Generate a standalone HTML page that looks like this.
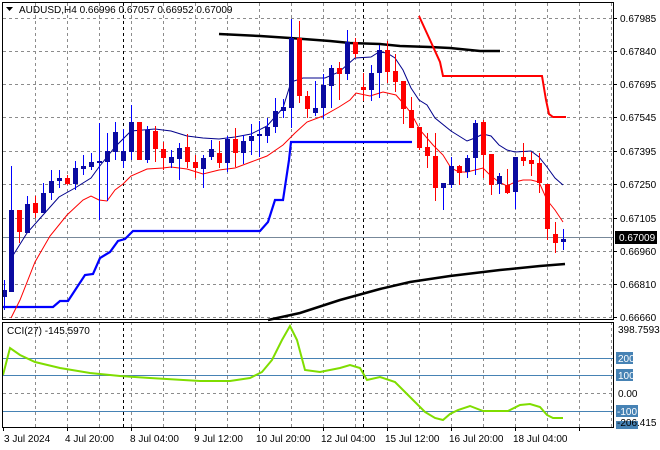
<!DOCTYPE html>
<html><head><meta charset="utf-8"><style>
html,body{margin:0;padding:0;background:#fff;width:660px;height:450px;overflow:hidden}
svg{display:block}
text{font-family:"Liberation Sans",sans-serif;font-size:10px;fill:#000}
</style></head><body>
<svg width="660" height="450" viewBox="0 0 660 450" xmlns="http://www.w3.org/2000/svg">
<rect width="660" height="450" fill="#fff"/>
<!-- grid -->
<g stroke="#8c8c8c" stroke-width="1" stroke-dasharray="3,3" shape-rendering="crispEdges">
<path d="M3 18.5H614M3 51.5H614M3 84.5H614M3 117.5H614M3 151.5H614M3 184.5H614M3 218.5H614M3 251.5H614M3 284.5H614M3 317.5H614M3 393.5H614"/>
<path d="M35.5 3V320M67.5 3V320M99.5 3V320M131.5 3V320M163.5 3V320M195.5 3V320M227.5 3V320M259.5 3V320M291.5 3V320M323.5 3V320M355.5 3V320M387.5 3V320M419.5 3V320M451.5 3V320M483.5 3V320M515.5 3V320M547.5 3V320M579.5 3V320M611.5 3V320"/>
<path d="M35.5 322V428M67.5 322V428M99.5 322V428M131.5 322V428M163.5 322V428M195.5 322V428M227.5 322V428M259.5 322V428M291.5 322V428M323.5 322V428M355.5 322V428M387.5 322V428M419.5 322V428M451.5 322V428M483.5 322V428M515.5 322V428M547.5 322V428M579.5 322V428M611.5 322V428"/>
</g>
<g stroke="#000" stroke-width="1" stroke-dasharray="3,3" shape-rendering="crispEdges">
<path d="M123.5 3V320M123.5 322V428M363.5 3V320M363.5 322V428"/>
</g>
<!-- current price line -->
<path d="M3 237.5H614" stroke="#778899" stroke-width="1" shape-rendering="crispEdges"/>
<!-- CCI levels -->
<g stroke="#4682b4" stroke-width="1" shape-rendering="crispEdges">
<path d="M3 358.5H614M3 375.5H614M3 411.5H614"/>
</g>
<!-- thick black MAs -->
<polyline points="219,34 260,36 290,38 330,41 350,43 380,44 400,46 430,47 450,48 480,51 500,51" fill="none" stroke="#000" stroke-width="2.5"/>
<polyline points="268,320 300,313 340,300 380,289 410,282 450,276 500,270 540,266 565,264" fill="none" stroke="#000" stroke-width="2.5"/>
<!-- blue stepped -->
<polyline points="3,307 12,307 53,307 60,301 68,301 85,275 93,274 100,258 110,252 118,241 125,239 133,231 260,231 268,222 275,200 283,200 289,160 291,142 412,142" fill="none" stroke="#0000ff" stroke-width="2.2"/>
<!-- red stepped -->
<polyline points="419,16 430,40 440,62 443,76 542,76 546,100 549,114 553,117 566,117" fill="none" stroke="#ff0000" stroke-width="2"/>
<!-- navy MA -->
<polyline points="12,257 27,233 43,215 59,197 75,188 91,178 99,167 115,147 131,131 155,129 171,131 187,136 203,138 219,139 235,137 251,134 267,126 283,108 291,82 303,78 325,78 339,72 355,58 371,57 379,52 387,53 395,58 403,70 411,88 419,100 427,105 435,118 451,131 459,136 467,141 475,138 483,134 491,136 499,145 507,150 515,152 531,151 539,157 547,167 555,178 563,185" fill="none" stroke="#00008b" stroke-width="1"/>
<!-- red MA -->
<polyline points="11,318 20,300 35,262 50,236 67,215 83,200 91,196 99,200 107,201 115,190 123,184 131,176 147,169 163,168 171,167 187,169 203,174 219,170 235,168 251,162 267,156 283,145 295,133 307,122 323,116 339,107 350,100 356,93 370,96 383,92 396,95 403,103 411,113 420,130 433,145 443,155 451,168 459,172 467,172 483,168 491,176 499,182 507,186 515,182 523,180 531,180 539,182 547,200 555,210 563,222" fill="none" stroke="#ff0000" stroke-width="1"/>
<!-- candles -->
<g stroke-width="1" fill="none">
<path stroke="#0000ff" d="M4.5 280V310M11.5 166V292M27.5 196V233M43.5 183V213M51.5 170V200M59.5 170V188M75.5 161V190M83.5 155V175M91.5 153V170M99.5 123V220M107.5 133V201M115.5 122V160M123.5 129V168M131.5 105V160M147.5 126V163M171.5 150V168M179.5 143V180M203.5 155V188M211.5 140V160M227.5 136V172M243.5 135V164M251.5 124V155M259.5 121V157M267.5 118V143M275.5 98V133M283.5 99V118M291.5 19V128M315.5 81V116M323.5 74V119M331.5 65V108M347.5 30V80M371.5 65V101M379.5 45V98M443.5 183V210M451.5 157V188M467.5 155V178M475.5 120V175M499.5 173V194M515.5 157V209M563.5 229V250"/>
<path stroke="#ff0000" d="M19.5 210V243M35.5 196V218M67.5 175V185M139.5 122V160M155.5 126V162M163.5 142V170M187.5 134V168M195.5 155V178M219.5 141V168M235.5 128V167M299.5 21V103M307.5 91V118M339.5 62V100M355.5 38V58M363.5 73V101M387.5 41V83M395.5 54V92M403.5 81V124M411.5 97V128M419.5 127V150M427.5 133V168M435.5 133V201M459.5 165V185M483.5 120V178M491.5 154V195M507.5 169V194M523.5 143V166M531.5 152V176M539.5 153V193M547.5 184V240M555.5 222V253"/>
</g>
<g stroke-width="5" fill="none">
<path stroke="#0a0aa0" d="M4.5 290V297M11.5 210V292M27.5 204V233M43.5 193V213M51.5 181V193M59.5 178V181M75.5 168V184M83.5 166V169M91.5 162V167M99.5 161V163M107.5 151V162M115.5 132V152M123.5 151V161M131.5 122V152M147.5 130V160M171.5 157V163M179.5 148V159M203.5 158V169M211.5 149V157M227.5 139V163M243.5 141V153M251.5 136V141M259.5 134V136M267.5 127V136M275.5 111V127M283.5 107V111M291.5 38V108M315.5 108V113M323.5 85V108M331.5 68V86M347.5 42V74M371.5 73V90M379.5 50V73M443.5 183V188M451.5 166V185M467.5 158V172M475.5 123V158M499.5 176V184M515.5 157V192M563.5 239V242"/>
<path stroke="#ff0000" d="M19.5 210V232M35.5 203V213M67.5 178V184M139.5 122V160M155.5 131V149M163.5 149V158M187.5 147V162M195.5 162V168M219.5 153V163M235.5 139V153M299.5 38V96M307.5 96V109M339.5 68V74M355.5 42V54M363.5 87V90M387.5 50V72M395.5 71V82M403.5 81V109M411.5 110V128M419.5 127V148M427.5 147V156M435.5 156V188M459.5 166V173M483.5 122V155M491.5 154V185M507.5 185V193M523.5 157V161M531.5 160V164M539.5 163V183M547.5 184V229M555.5 234V243"/>
</g>
<!-- CCI line -->
<polyline points="3,375 10,348 20,355 35,362 60,368 90,373 120,376 150,378 200,381 230,381 250,378 262,372 272,360 282,340 290,326 297,340 305,370 320,372 340,368 350,365 360,368 367,380 380,377 395,382 405,392 415,402 425,412 435,418 443,420 450,414 458,410 470,406 483,411 508,411 520,405 530,404 540,407 547,415 553,418 563,418" fill="none" stroke="#7fdd00" stroke-width="2"/>
<!-- frames -->
<g fill="none" stroke="#000" stroke-width="1" shape-rendering="crispEdges">
<rect x="2.5" y="2.5" width="611" height="317"/>
<rect x="2.5" y="322.5" width="611" height="105"/>
</g>
<!-- header -->
<path d="M6 7H13L9.5 11Z" fill="#000"/>
<text x="19" y="13">AUDUSD,H4  0.66996 0.67057 0.66952 0.67009</text>
<text x="7" y="334">CCI(27) -145.5970</text>
<!-- right axis -->
<g shape-rendering="crispEdges" stroke="#000">
<path d="M614 18.5h3M614 51.5h3M614 84.5h3M614 117.5h3M614 151.5h3M614 184.5h3M614 218.5h3M614 251.5h3M614 284.5h3M614 317.5h3"/>
</g>
<text x="620" y="22">0.67985</text>
<text x="620" y="55">0.67840</text>
<text x="620" y="88">0.67695</text>
<text x="620" y="121">0.67545</text>
<text x="620" y="155">0.67395</text>
<text x="620" y="188">0.67250</text>
<text x="620" y="222">0.67105</text>
<text x="620" y="255">0.66960</text>
<text x="620" y="288">0.66810</text>
<text x="620" y="321">0.66660</text>
<rect x="615" y="231" width="42" height="13" fill="#000"/>
<text x="619" y="241" style="fill:#fff">0.67009</text>
<text x="618" y="333">398.7593</text>
<rect x="616" y="352" width="17" height="12" fill="#4682b4"/>
<text x="618" y="362" style="fill:#fff">200</text>
<rect x="616" y="369" width="17" height="12" fill="#4682b4"/>
<text x="618" y="379" style="fill:#fff">100</text>
<text x="618" y="397">0.00</text>
<rect x="616" y="405" width="22" height="12" fill="#4682b4"/>
<text x="617" y="415" style="fill:#fff">-100</text>
<rect x="616" y="421" width="22" height="8" fill="#4682b4"/>
<text x="617" y="426">-206.415</text>
<!-- time axis -->
<text x="4" y="442">3 Jul 2024</text>
<text x="65" y="442">4 Jul 20:00</text>
<text x="130" y="442">8 Jul 04:00</text>
<text x="194" y="442">9 Jul 12:00</text>
<text x="256" y="442">10 Jul 20:00</text>
<text x="321" y="442">12 Jul 04:00</text>
<text x="385" y="442">15 Jul 12:00</text>
<text x="449" y="442">16 Jul 20:00</text>
<text x="513" y="442">18 Jul 04:00</text>
<g stroke="#000" shape-rendering="crispEdges"><path d="M3.5 428v3M67.5 428v3M131.5 428v3M195.5 428v3M259.5 428v3M323.5 428v3M387.5 428v3M451.5 428v3M515.5 428v3M579.5 428v3"/></g>
</svg>
</body></html>
